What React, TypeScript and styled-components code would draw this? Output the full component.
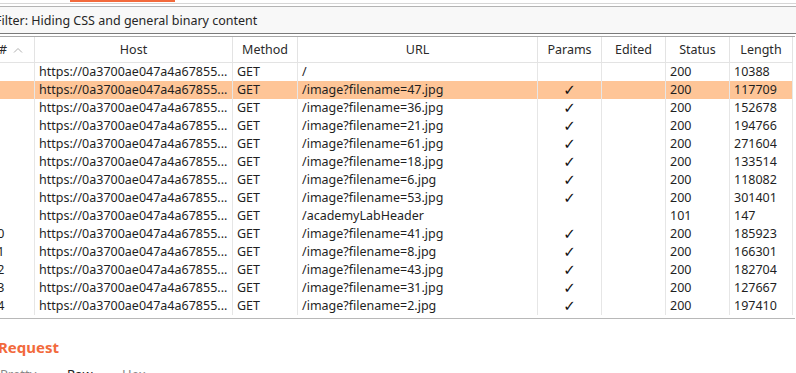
import React from "react";
import styled, { createGlobalStyle } from "styled-components";

const Global = createGlobalStyle`
  html, body { margin: 0; padding: 0; background: #ffffff; }
  body { font-family: "Noto Sans", "Open Sans", sans-serif; color: #1f1f1f; overflow: hidden; }
`;

const Page = styled.div`
  width: 796px;
  height: 373px;
  overflow: hidden;
`;

const TabStrip = styled.div`
  height: 3px;
  border-bottom: 1px solid #d6d6d6;
  display: flex;
`;

const TabIndicator = styled.div`
  margin-left: 70px;
  width: 105px;
  height: 2px;
  background: #f26a3c;
`;

const FilterBar = styled.div`
  margin: 2px 0 0 -6px;
  height: 25px;
  border: 1px solid #b4b4b4;
  border-bottom-color: #7a7a7a;
  border-right: none;
  background: #f8f8f8;
  display: flex;
  align-items: center;
  padding: 1px 0 0 0;
  box-sizing: content-box;
  font-size: 12.5px;
  color: #262626;
`;

const Table = styled.div`
  margin-top: 2px;
  display: grid;
  grid-template-columns: 35px 198px 65px 240px 64px 64px 64px 63px;
  width: 795px;
  border-top: 1px solid #a8a8a8;
  border-bottom: 1px solid #b8b8b8;
  padding-bottom: 3px;
`;

const HeadCell = styled.div<{ $align?: string }>`
  height: 25px;
  display: flex;
  align-items: center;
  justify-content: ${(p) => p.$align || "center"};
  font-size: 12.5px;
  color: #2a2a2a;
  border-right: 1px solid #e3e3e3;
  border-bottom: 1px solid #e3e3e3;
  white-space: nowrap;
  overflow: hidden;
`;

const Hash = styled.span`
  margin-left: -1px;
`;

const SortArrow = styled.svg`
  margin-left: 6px;
`;

const Row = styled.div<{ $selected?: boolean }>`
  display: contents;
  & > div {
    background: ${(p) => (p.$selected ? "#fec597" : "transparent")};
  }
`;

const Cell = styled.div<{ $center?: boolean; $indent?: number }>`
  height: 18px;
  line-height: 18px;
  font-size: 12.5px;
  white-space: nowrap;
  overflow: hidden;
  border-right: 1px solid #e6e6e6;
  padding-left: ${(p) => (p.$center ? 0 : 4)}px;
  text-align: ${(p) => (p.$center ? "center" : "left")};
  text-indent: ${(p) => p.$indent || 0}px;
  color: #1f1f1f;
`;

const Check = styled.span`
  font-family: "DejaVu Sans", sans-serif;
  font-size: 15px;
  line-height: 18px;
  color: #111;
`;

const Section = styled.div`
  padding-top: 18px;
  margin-left: -2px;
  font-size: 15px;
  font-weight: 700;
  color: #f26a3c;
  line-height: 20px;
`;

const ViewTabs = styled.div`
  display: flex;
  margin-top: 8px;
  font-size: 13px;
  line-height: 18px;
`;

const ViewTab = styled.span<{ $active?: boolean; $w: number }>`
  width: ${(p) => p.$w}px;
  color: ${(p) => (p.$active ? "#222" : "#888")};
`;

const host = "https://0a3700ae047a4a67855...";

const rows: { url: string; params: boolean; status: number; length: number }[] = [
  { url: "/", params: false, status: 200, length: 10388 },
  { url: "/image?filename=47.jpg", params: true, status: 200, length: 117709 },
  { url: "/image?filename=36.jpg", params: true, status: 200, length: 152678 },
  { url: "/image?filename=21.jpg", params: true, status: 200, length: 194766 },
  { url: "/image?filename=61.jpg", params: true, status: 200, length: 271604 },
  { url: "/image?filename=18.jpg", params: true, status: 200, length: 133514 },
  { url: "/image?filename=6.jpg", params: true, status: 200, length: 118082 },
  { url: "/image?filename=53.jpg", params: true, status: 200, length: 301401 },
  { url: "/academyLabHeader", params: false, status: 101, length: 147 },
  { url: "/image?filename=41.jpg", params: true, status: 200, length: 185923 },
  { url: "/image?filename=8.jpg", params: true, status: 200, length: 166301 },
  { url: "/image?filename=43.jpg", params: true, status: 200, length: 182704 },
  { url: "/image?filename=31.jpg", params: true, status: 200, length: 127667 },
  { url: "/image?filename=2.jpg", params: true, status: 200, length: 197410 },
];

export default function App() {
  return (
    <>
      <Global />
      <Page>
        <TabStrip>
          <TabIndicator />
        </TabStrip>
        <FilterBar>Filter: Hiding CSS and general binary content</FilterBar>
        <Table>
          <HeadCell $align="flex-start">
            <Hash>#</Hash>
            <SortArrow width="10" height="6" viewBox="0 0 10 6">
              <path d="M1 5.5 L5 1.5 L9 5.5" fill="none" stroke="#b0b0b0" strokeWidth="1" />
            </SortArrow>
          </HeadCell>
          <HeadCell>Host</HeadCell>
          <HeadCell>Method</HeadCell>
          <HeadCell>URL</HeadCell>
          <HeadCell>Params</HeadCell>
          <HeadCell>Edited</HeadCell>
          <HeadCell>Status</HeadCell>
          <HeadCell>Length</HeadCell>
          {rows.map((r, i) => (
            <Row key={i} $selected={i === 1}>
              <Cell $indent={-14}>{i + 1 >= 10 ? i + 1 : ""}</Cell>
              <Cell>{host}</Cell>
              <Cell>GET</Cell>
              <Cell>{r.url}</Cell>
              <Cell $center>{r.params ? <Check>✓</Check> : ""}</Cell>
              <Cell />
              <Cell>{r.status}</Cell>
              <Cell>{r.length}</Cell>
            </Row>
          ))}
        </Table>
        <Section>Request</Section>
        <ViewTabs>
          <ViewTab $w={67}>Pretty</ViewTab>
          <ViewTab $w={55} $active>Raw</ViewTab>
          <ViewTab $w={40}>Hex</ViewTab>
        </ViewTabs>
      </Page>
    </>
  );
}
